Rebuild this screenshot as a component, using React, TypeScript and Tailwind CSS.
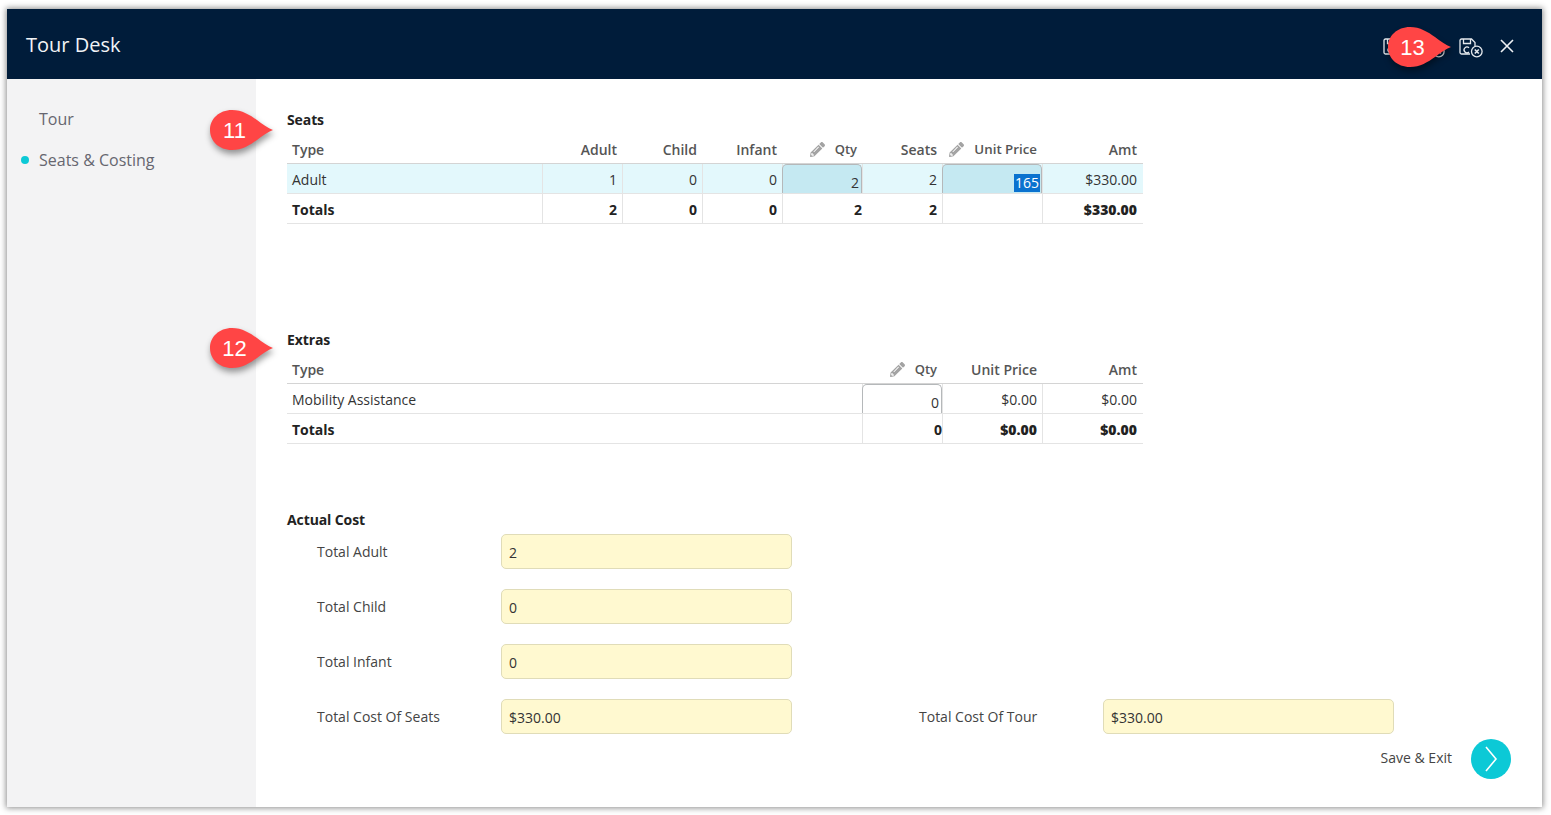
import React from "react";
import { FaPencilAlt } from "react-icons/fa";

const Callout = ({ n, className }: { n: string; className: string }) => (
  <div className={`absolute w-[63px] h-[40px] ${className}`}>
    <svg width="63" height="40" viewBox="0 0 63 40" className="absolute inset-0 overflow-visible drop-shadow-[1px_4px_3px_rgba(0,0,0,0.4)]">
      <path d="M22 0 C32 0 40 5 47 10 C52 14 58 18 63 20 C58 22 52 26 47 30 C40 35 32 40 22 40 C9 40 0 31 0 20 C0 9 9 0 22 0 Z" fill="#ff4545" />
    </svg>
    <span className="absolute left-0 top-0 w-[49px] h-[40px] flex items-center justify-center text-white text-[22px] [font-family:Liberation_Sans,Arial,sans-serif]">{n}</span>
  </div>
);

const SaveIcon = ({ badge }: { badge?: boolean }) => (
  <svg width="24" height="20" viewBox="0 0 24 20" fill="none" stroke="#e6eaee" strokeWidth="1.3">
    <path d="M16 8 V4.5 L12.5 1 H2.5 A1.5 1.5 0 0 0 1 2.5 V14.5 A1.5 1.5 0 0 0 2.5 16 H11" />
    <path d="M4.5 1 V5.5 H11.5 V1" />
    <path d="M10 9.8 A2.9 2.9 0 1 0 10 14" />
    {badge && (
      <>
        <circle cx="17.8" cy="13.5" r="5.3" />
        <path d="M15.8 11.5 L19.8 15.5 M19.8 11.5 L15.8 15.5" strokeWidth="1.6" />
      </>
    )}
  </svg>
);

const Pencil = () => <FaPencilAlt className="text-[#a3a3a3] w-[15px] h-[15px] inline-block" />;

const th = "h-[30px] border-b border-[#d4d4d4] pl-[5px] pr-[6px] pt-[2px] font-semibold text-[#555555] align-middle";
const tdBase = "h-[30px] pl-[5px] pt-[2px] align-middle border-b border-b-[#e4e4e4]";
const td = `${tdBase} pr-[5px] text-right border-r border-r-[#e4e4e4]`;
const tdn = `${tdBase} pr-[6px] text-right`;
const tdl = `${tdBase} pr-[5px] text-left border-r border-r-[#e4e4e4]`;
const table = "w-[856px] table-fixed border-separate border-spacing-0 text-[14px] text-[#333333]";
const title = "text-[14px] leading-[20px] font-bold tracking-[-0.1px] text-[#222222]";

const EditCell = ({ value, bg, selected }: { value: string; bg: string; selected?: boolean }) => (
  <td className="h-[30px] p-0 border-b border-b-[#e4e4e4] border-r border-r-[#e4e4e4]">
    <div className={`h-[29px] -ml-[1px] ${bg} rounded-t-[5px] border-t border-x border-[#b5b8ba] flex items-end justify-end pb-[1px] pr-[1px]`}>
      {selected ? (
        <span className="bg-[#0a72cf] text-white px-[1px] leading-[18px]">{value}</span>
      ) : (
        <span className="pr-[1px] leading-[18px]">{value}</span>
      )}
    </div>
  </td>
);

const SeatsTable = () => (
  <table className={table}>
    <colgroup>
      <col className="w-[256px]" />
      <col className="w-[80px]" />
      <col className="w-[80px]" />
      <col className="w-[80px]" />
      <col className="w-[80px]" />
      <col className="w-[80px]" />
      <col className="w-[100px]" />
      <col className="w-[100px]" />
    </colgroup>
    <thead>
      <tr>
        <th className={`${th} text-left`}>Type</th>
        <th className={`${th} text-right`}>Adult</th>
        <th className={`${th} text-right`}>Child</th>
        <th className={`${th} text-right`}>Infant</th>
        <th className={`${th} text-right`}>
          <span className="flex items-center justify-end gap-[10px] text-[13px]"><Pencil />Qty</span>
        </th>
        <th className={`${th} text-right`}>Seats</th>
        <th className={`${th} text-right`}>
          <span className="flex items-center justify-end gap-[10px] text-[13.3px]"><Pencil />Unit Price</span>
        </th>
        <th className={`${th} text-right`}>Amt</th>
      </tr>
    </thead>
    <tbody>
      <tr className="bg-[#e3f8fc]">
        <td className={tdl}>Adult</td>
        <td className={td}>1</td>
        <td className={td}>0</td>
        <td className={td}>0</td>
        <EditCell value="2" bg="bg-[#c5e9f2]" />
        <td className={td}>2</td>
        <EditCell value="165" bg="bg-[#c5e9f2]" selected />
        <td className={tdn}>$330.00</td>
      </tr>
      <tr className="font-bold text-[#222222]">
        <td className={tdl}>Totals</td>
        <td className={td}>2</td>
        <td className={td}>0</td>
        <td className={td}>0</td>
        <td className={`${tdBase} pr-[1px] text-right`}>2</td>
        <td className={td}>2</td>
        <td className={td}></td>
        <td className={`${tdn} font-extrabold`}>$330.00</td>
      </tr>
    </tbody>
  </table>
);

const ExtrasTable = () => (
  <table className={table}>
    <colgroup>
      <col className="w-[576px]" />
      <col className="w-[80px]" />
      <col className="w-[100px]" />
      <col className="w-[100px]" />
    </colgroup>
    <thead>
      <tr>
        <th className={`${th} text-left`}>Type</th>
        <th className={`${th} text-right`}>
          <span className="flex items-center justify-end gap-[10px] text-[13px]"><Pencil />Qty</span>
        </th>
        <th className={`${th} text-right`}>Unit Price</th>
        <th className={`${th} text-right`}>Amt</th>
      </tr>
    </thead>
    <tbody>
      <tr>
        <td className={tdl}>Mobility Assistance</td>
        <EditCell value="0" bg="bg-white" />
        <td className={td}>$0.00</td>
        <td className={tdn}>$0.00</td>
      </tr>
      <tr className="font-bold text-[#222222]">
        <td className={tdl}>Totals</td>
        <td className={`${tdBase} pr-0 text-right border-r border-r-[#e4e4e4]`}>0</td>
        <td className={`${td} font-extrabold`}>$0.00</td>
        <td className={`${tdn} font-extrabold`}>$0.00</td>
      </tr>
    </tbody>
  </table>
);

const Field = ({ value }: { value: string }) => (
  <div className="w-[291px] h-[35px] rounded-[5px] border border-[#e0dcb8] bg-[#fff9d0] pl-[7px] pt-[1px] flex items-center text-[14px] text-[#333333]">
    {value}
  </div>
);

const FormRow = ({ label, value, children }: { label: string; value: string; children?: React.ReactNode }) => (
  <div className="flex h-[35px] items-center pl-[30px] text-[14px] text-[#444444]">
    <span className="w-[184px] -mt-[1px]">{label}</span>
    <Field value={value} />
    {children}
  </div>
);

export default function App() {
  return (
    <div className="relative w-[1551px] h-[815px] overflow-hidden bg-white pl-[7px] pt-[9px] [font-family:Open_Sans,sans-serif]">
      <div className="relative flex flex-col w-[1535px] h-[798px] bg-white shadow-[0_0_6px_1px_rgba(0,0,0,0.45)]">
        <header className="flex h-[70px] shrink-0 items-center justify-between bg-[#001c3a] pl-[19px] pr-[27px]">
          <h1 className="text-[20px] text-[#f2f4f6] font-normal mt-[1px]">Tour Desk</h1>
          <div className="flex items-start gap-[14px] mt-[8px]">
            <SaveIcon />
            <SaveIcon badge />
            <SaveIcon badge />
            <svg width="16" height="16" viewBox="0 0 16 16" className="ml-[2px]" stroke="#eef1f4" strokeWidth="1.6" fill="none">
              <path d="M2 2 L14 14 M14 2 L2 14" />
            </svg>
          </div>
        </header>
        <div className="flex flex-1 min-h-0">
          <aside className="w-[249px] shrink-0 bg-[#f3f3f4] pt-[29px] pl-[14px] text-[16px] text-[#66666f]">
            <div className="flex h-[22px] items-center pl-[18px]">Tour</div>
            <div className="flex h-[22px] items-center mt-[19px]">
              <span className="w-[8px] h-[8px] rounded-full bg-[#0cc9d6] mr-[10px]" />
              Seats &amp; Costing
            </div>
          </aside>
          <main className="flex-1 pl-[31px] pt-[31px]">
            <h2 className={title}>Seats</h2>
            <div className="mt-[4px]"><SeatsTable /></div>
            <h2 className={`mt-[106px] ${title}`}>Extras</h2>
            <div className="mt-[4px]"><ExtrasTable /></div>
            <h2 className={`mt-[66px] ${title}`}>Actual Cost</h2>
            <div className="mt-[4px] flex flex-col gap-[20px]">
              <FormRow label="Total Adult" value="2" />
              <FormRow label="Total Child" value="0" />
              <FormRow label="Total Infant" value="0" />
              <FormRow label="Total Cost Of Seats" value="$330.00">
                <span className="ml-[127px] w-[184px] -mt-[1px]">Total Cost Of Tour</span>
                <Field value="$330.00" />
              </FormRow>
            </div>
            <div className="mt-[5px] flex items-center justify-end pr-[31px] gap-[19px]">
              <span className="text-[14px] text-[#444444] -mt-[3px]">Save &amp; Exit</span>
              <span className="flex w-[40px] h-[40px] items-center justify-center rounded-full bg-[#0cc9d6]">
                <svg width="14" height="26" viewBox="0 0 14 26" fill="none" stroke="#ffffff" strokeWidth="1.6">
                  <path d="M2 1 L12 13 L2 25" />
                </svg>
              </span>
            </div>
          </main>
        </div>
      </div>
      <Callout n="11" className="left-[210px] top-[110px]" />
      <Callout n="12" className="left-[210px] top-[328px]" />
      <Callout n="13" className="left-[1388px] top-[27px]" />
    </div>
  );
}
